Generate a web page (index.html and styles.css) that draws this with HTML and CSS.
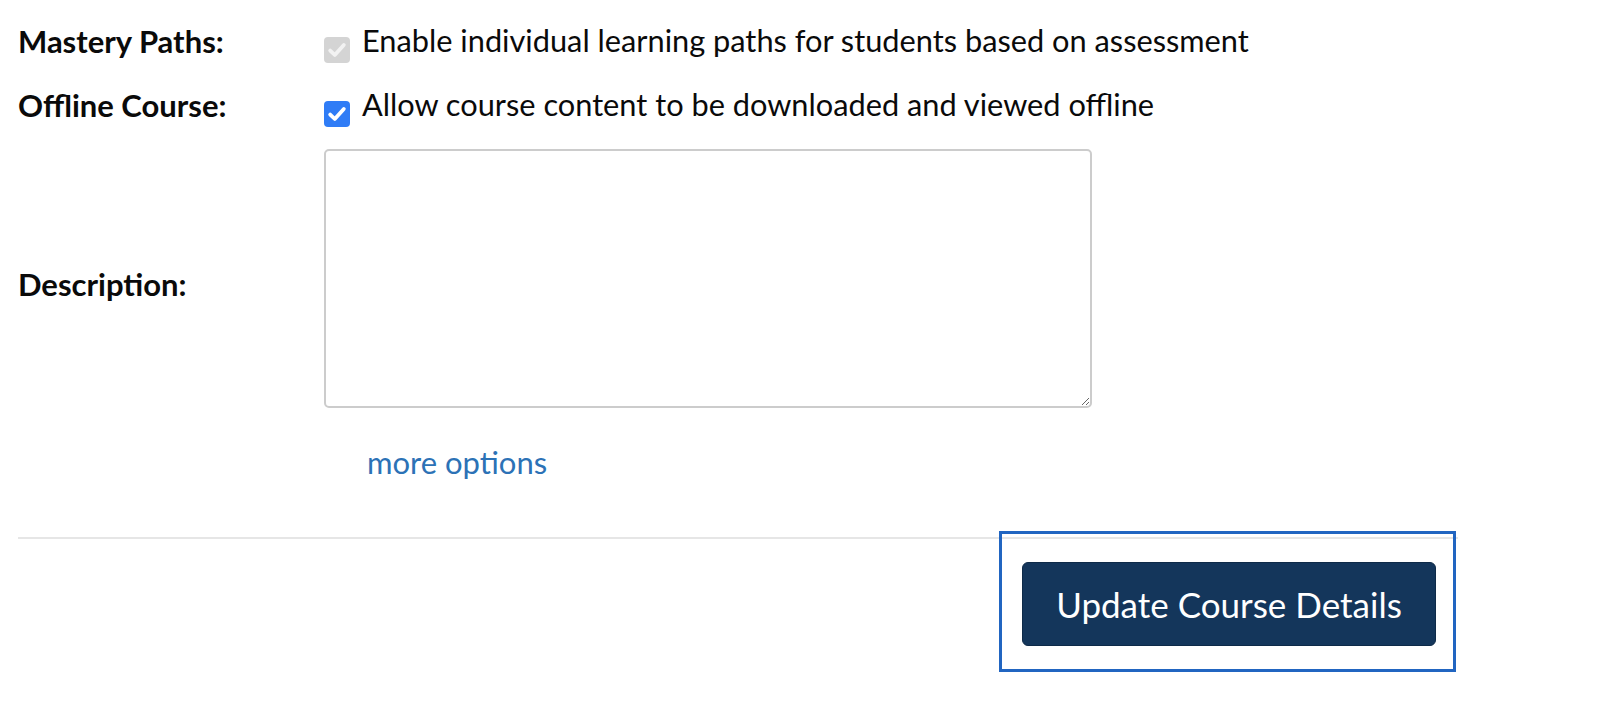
FILE: index.html
```html
<!DOCTYPE html>
<html lang="en">
<head>
<meta charset="utf-8">
<title>Course Details</title>
<link rel="stylesheet" href="styles.css">
</head>
<body>
<form class="form">
  <div class="row row-check">
    <div class="label">Mastery Paths:</div>
    <div class="check-cell">
      <span class="checkbox checkbox-disabled">
        <svg viewBox="0 0 26 26" width="26" height="26"><path d="M6.2 13.6 L10.8 18 L19.8 8" fill="none" stroke="#f2f2f2" stroke-width="3.8" stroke-linecap="round" stroke-linejoin="round"/></svg>
      </span>
      <span class="check-text">Enable individual learning paths for students based on assessment</span>
    </div>
  </div>
  <div class="row row-check">
    <div class="label">Offline Course:</div>
    <div class="check-cell">
      <span class="checkbox checkbox-on">
        <svg viewBox="0 0 26 26" width="26" height="26"><path d="M6.2 13.6 L10.8 18 L19.8 8" fill="none" stroke="#ffffff" stroke-width="3.8" stroke-linecap="round" stroke-linejoin="round"/></svg>
      </span>
      <span class="check-text">Allow course content to be downloaded and viewed offline</span>
    </div>
  </div>
  <div class="row row-desc">
    <div class="label label-desc">Description:</div>
    <div><textarea class="desc"></textarea></div>
  </div>
  <div class="more"><a href="#" class="more-link">more options</a></div>
  <hr class="divider">
  <div class="actions">
    <div class="focus-box">
      <button type="button" class="btn">Update Course Details</button>
    </div>
  </div>
</form>
</body>
</html>
```

FILE: styles.css
```css
* { box-sizing: border-box; }
html, body { margin: 0; padding: 0; background: #ffffff; }
body {
  font-family: Lato, "Noto Sans", sans-serif;
  font-size: 31px;
  color: #0a0a0a;
  width: 1598px;
  height: 706px;
  overflow: hidden;
}
.form { padding: 9px 0 0 18px; }
.row {
  display: grid;
  grid-template-columns: 306px auto;
  align-items: center;
}
.label { font-weight: 700; line-height: 34px; }
.row-check { padding: 15px 0; line-height: 34px; height: 64px; }
.check-cell { display: flex; align-items: flex-start; height: 34px; }
.checkbox {
  width: 26px;
  height: 26px;
  border-radius: 4px;
  margin-top: 13px;
  margin-bottom: -5px;
  margin-right: 12px;
  flex: none;
  display: block;
}
.checkbox svg { display: block; }
.checkbox-disabled { background: #d4d4d4; }
.checkbox-on { background: #2f7cf6; }
.check-text { line-height: 34px; white-space: nowrap; font-size: 30.75px; }
.row-desc { padding-top: 12px; }
.label-desc { padding-top: 11px; }
.desc {
  display: block;
  width: 768px;
  height: 259px;
  border: 2px solid #cccccc;
  border-radius: 5px;
  resize: both;
  font: inherit;
  margin: 0;
  padding: 6px;
}
.more { padding: 37px 0 0 349px; line-height: 34px; }
.more-link { color: #2c72b6; text-decoration: none; }
.divider {
  margin: 58px 0 0 0;
  width: 1440px;
  height: 2px;
  border: 0;
  background: #e6e6e6;
}
.actions {
  width: 1440px;
  display: flex;
  justify-content: flex-end;
}
.focus-box {
  margin-top: -8px;
  margin-right: 2px;
  border: 3px solid #2165c1;
  padding: 28px 17px 23px 20px;
}
.btn {
  display: block;
  width: 414px;
  height: 84px;
  background: #14365b;
  color: #ffffff;
  border: 1px solid #0e2a48;
  border-radius: 6px;
  font-family: Lato, "Noto Sans", sans-serif;
  font-size: 35px;
  padding: 0;
  cursor: pointer;
}
```
